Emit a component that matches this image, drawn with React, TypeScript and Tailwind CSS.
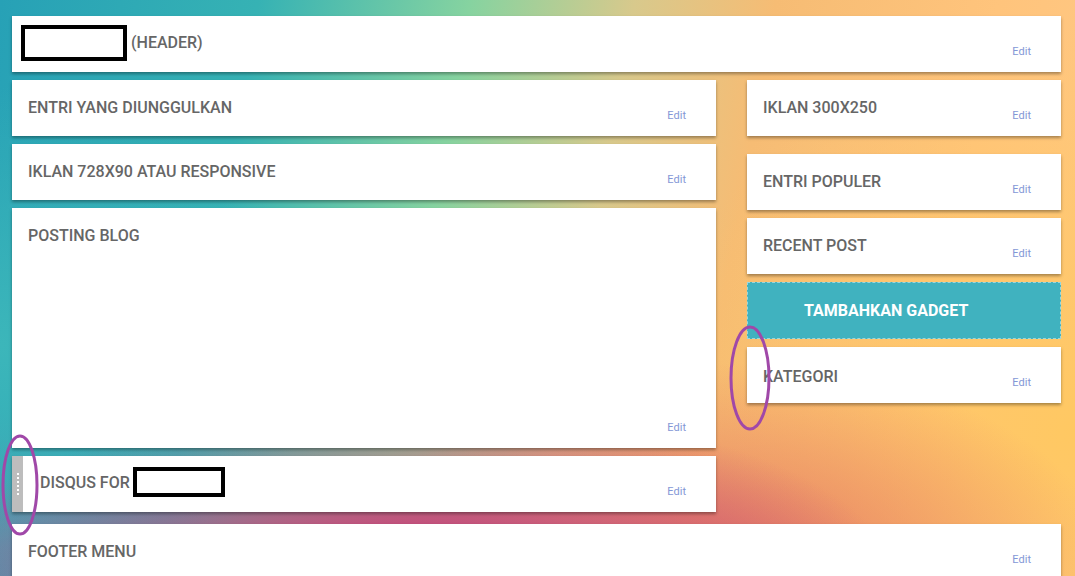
import React from 'react'

// Layout editor mock: gradient backdrop, gadget cards in two columns
const FONT = { fontFamily: 'Roboto, "Noto Sans", Arial, sans-serif' }

function Edit() {
  return <span className="self-end text-[11px] leading-none text-[#8497d6]">Edit</span>
}

function Gadget({ title, className = '', children }: { title?: string; className?: string; children?: React.ReactNode }) {
  return (
    <div className={`flex justify-between bg-white pl-4 pr-[30px] pt-[18px] pb-[15px] shadow-[0_2px_3px_rgba(0,0,0,0.35)] ${className}`}>
      <div className="self-start text-[16px] font-medium leading-5 text-[#666666]">{children ?? title}</div>
      <Edit />
    </div>
  )
}

export default function App() {
  return (
    <div
      className="relative h-[576px] w-[1075px] overflow-hidden"
      style={FONT}
    >
      <div className="absolute inset-0 bg-[radial-gradient(ellipse_45%_30%_at_38%_100%,#c4487a_0%,#c4487a_25%,rgba(196,72,122,0)_100%),radial-gradient(ellipse_35%_35%_at_68%_98%,#e57a62_0%,rgba(229,122,98,0)_100%),radial-gradient(ellipse_40%_70%_at_100%_75%,#ffc862_0%,rgba(255,200,98,0)_100%),radial-gradient(ellipse_30%_45%_at_0%_60%,#3cb6ba_0%,rgba(60,182,186,0)_100%),radial-gradient(ellipse_20%_25%_at_0%_95%,#5a8fae_0%,rgba(90,143,174,0)_100%),linear-gradient(100deg,#27a1b6_0%,#36b2b4_22%,#86d3a0_40%,#d8c98c_54%,#f6bc74_66%,#ffc47c_85%,#ffc884_100%)]" />

      <div className="relative flex flex-col pl-3 pr-[14px] pt-4">
        {/* header */}
        <div className="flex h-14 justify-between bg-white pl-[9px] pr-[30px] pt-[9px] pb-[15px] shadow-[0_2px_3px_rgba(0,0,0,0.35)]">
          <div className="flex items-center self-start gap-1 text-[16px] font-medium text-[#666666]">
            <div className="h-9 w-[106px] border-4 border-black bg-white" />
            <span>(HEADER)</span>
          </div>
          <Edit />
        </div>

        <div className="mt-2 flex gap-[31px]">
          {/* main column */}
          <div className="flex w-[704px] flex-col gap-2">
            <Gadget className="h-14" title="ENTRI YANG DIUNGGULKAN" />
            <Gadget className="h-14" title="IKLAN 728X90 ATAU RESPONSIVE" />
            <Gadget className="h-[240px]" title="POSTING BLOG" />
            <div className="flex h-14 bg-white shadow-[0_2px_3px_rgba(0,0,0,0.35)]">
              <div className="flex w-[11px] flex-col items-center justify-center gap-[2px] bg-[#bdbdbd]">
                {[0, 1, 2, 3, 4, 5].map(i => (
                  <span key={i} className="h-[2px] w-[2px] bg-white" />
                ))}
              </div>
              <div className="flex flex-1 justify-between pl-[17px] pr-[30px] pt-[11px] pb-[15px]">
                <div className="flex items-center self-start gap-[3px] text-[16px] font-medium text-[#666666]">
                  <span className="pt-[2px]">DISQUS FOR</span>
                  <div className="h-[30px] w-[92px] border-4 border-black bg-white" />
                </div>
                <Edit />
              </div>
            </div>
          </div>

          {/* sidebar */}
          <div className="flex w-[314px] flex-col">
            <Gadget className="h-14" title="IKLAN 300X250" />
            <Gadget className="mt-[18px] h-14" title="ENTRI POPULER" />
            <Gadget className="mt-2 h-14" title="RECENT POST" />
            <div className="mt-2 flex h-[57px] items-center border border-dashed border-[#9ad6dd] bg-[#40b2bf] pl-[56px] text-[16px] font-bold text-white">
              TAMBAHKAN GADGET
            </div>
            <Gadget className="mt-2 h-14 pt-[20px]" title="KATEGORI" />
          </div>
        </div>

        <Gadget className="mt-3 h-14" title="FOOTER MENU" />
      </div>

      {/* annotation rings */}
      <svg className="pointer-events-none absolute inset-0" width="1075" height="576">
        <ellipse cx="20" cy="485" rx="17" ry="49" fill="none" stroke="#a048a8" strokeWidth="3" />
        <ellipse cx="750" cy="378" rx="19" ry="51" fill="none" stroke="#a048a8" strokeWidth="3" />
      </svg>
    </div>
  )
}
